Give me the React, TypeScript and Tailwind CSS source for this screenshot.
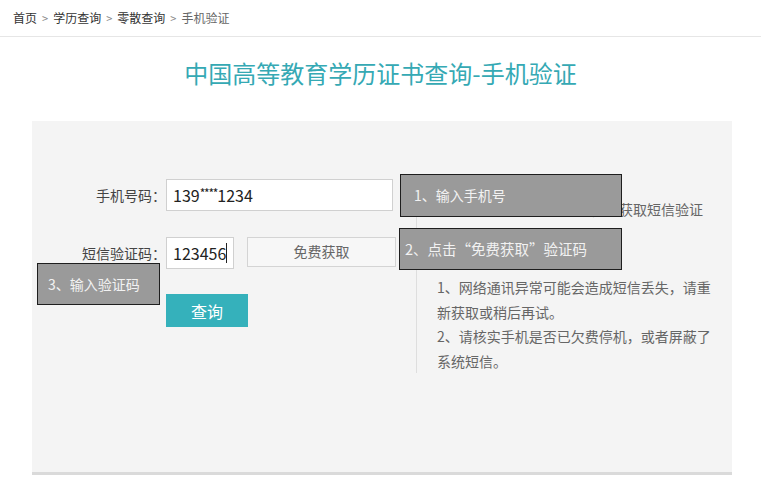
const font = { fontFamily: '"Noto Sans CJK SC", "Noto Sans", sans-serif' };

function Breadcrumb() {
  const items = ["首页", "学历查询", "零散查询"];
  return (
    <div className="h-[37px] border-b border-[#e6e6e6] pl-[13px] flex items-center text-[12px] text-[#333]">
      {items.map((t) => (
        <span key={t} className="flex items-center">
          <span>{t}</span>
          <span className="mx-[5px] text-[#888] text-[11px]">&gt;</span>
        </span>
      ))}
      <span className="text-[#666]">手机验证</span>
    </div>
  );
}

export default function App() {
  return (
    <div className="relative w-[761px] h-[486px] bg-white overflow-hidden" style={font}>
      <Breadcrumb />

      <h1 className="text-center text-[24px] text-[#35a9b4] mt-[22px] leading-[28px]">
        中国高等教育学历证书查询-手机验证
      </h1>

      <section className="ml-[32px] mt-[34px] w-[700px] h-[354px] bg-[#f4f4f4] border-b-[3px] border-[#dadada] flex">
        {/* left: form */}
        <div className="w-[384px] shrink-0 pt-[58px]">
          <div className="flex items-center h-[32px]">
            <label className="w-[134px] text-right text-[14px] text-[#444]">手机号码：</label>
            <div className="w-[227px] h-[32px] bg-white border border-[#d0d0d0] flex items-center pl-[6px] text-[16px] text-[#222]">
              139<span className="text-[12px] tracking-[-1.2px] relative -top-[2px]">****</span>1234
            </div>
          </div>

          <div className="flex items-center h-[32px] mt-[26px]">
            <label className="w-[134px] text-right text-[14px] text-[#444]">短信验证码：</label>
            <div className="w-[68px] h-[32px] bg-white border border-[#d0d0d0] flex items-center pl-[6px] text-[16px] text-[#222]">
              123456<span className="inline-block w-px h-[20px] bg-[#222]" />
            </div>
            <button className="ml-[13px] w-[149px] h-[30px] -mt-[3px] bg-[#f7f7f7] border border-[#d4d4d4] text-[14px] text-[#666]">
              免费获取
            </button>
          </div>

          <button className="ml-[134px] mt-[25px] w-[82px] h-[33px] bg-[#35b1bb] text-white text-[16px]">
            查询
          </button>
        </div>

        {/* right: tips */}
        <div className="mt-[76px] h-[176px] w-[316px] border-l border-[#dedede] pl-[20px] pr-[20px] text-[14px] text-[#666] leading-[24.5px]">
          <p>请点击“免费获取”按钮，以获取短信验证码。</p>
          <p className="mt-[29px]">1、网络通讯异常可能会造成短信丢失，请重新获取或稍后再试。</p>
          <p>2、请核实手机是否已欠费停机，或者屏蔽了系统短信。</p>
        </div>
      </section>

      {/* annotation boxes */}
      <div className="absolute left-[400px] top-[174px] w-[222px] h-[43px] bg-[#9a9a9a] border border-[#1e1e1e] text-[#f2f2f2] text-[14px] flex items-center pl-[13px]">
        1、输入手机号
      </div>
      <div className="absolute left-[399px] top-[228px] w-[223px] h-[42px] bg-[#9a9a9a] border border-[#1e1e1e] text-[#f2f2f2] text-[14.5px] flex items-center pl-[5px]">
        2、点击“免费获取”验证码
      </div>
      <div className="absolute left-[37px] top-[263px] w-[123px] h-[42px] bg-[#9a9a9a] border border-[#1e1e1e] text-[#f2f2f2] text-[14px] flex items-center pl-[10px]">
        3、输入验证码
      </div>
    </div>
  );
}
